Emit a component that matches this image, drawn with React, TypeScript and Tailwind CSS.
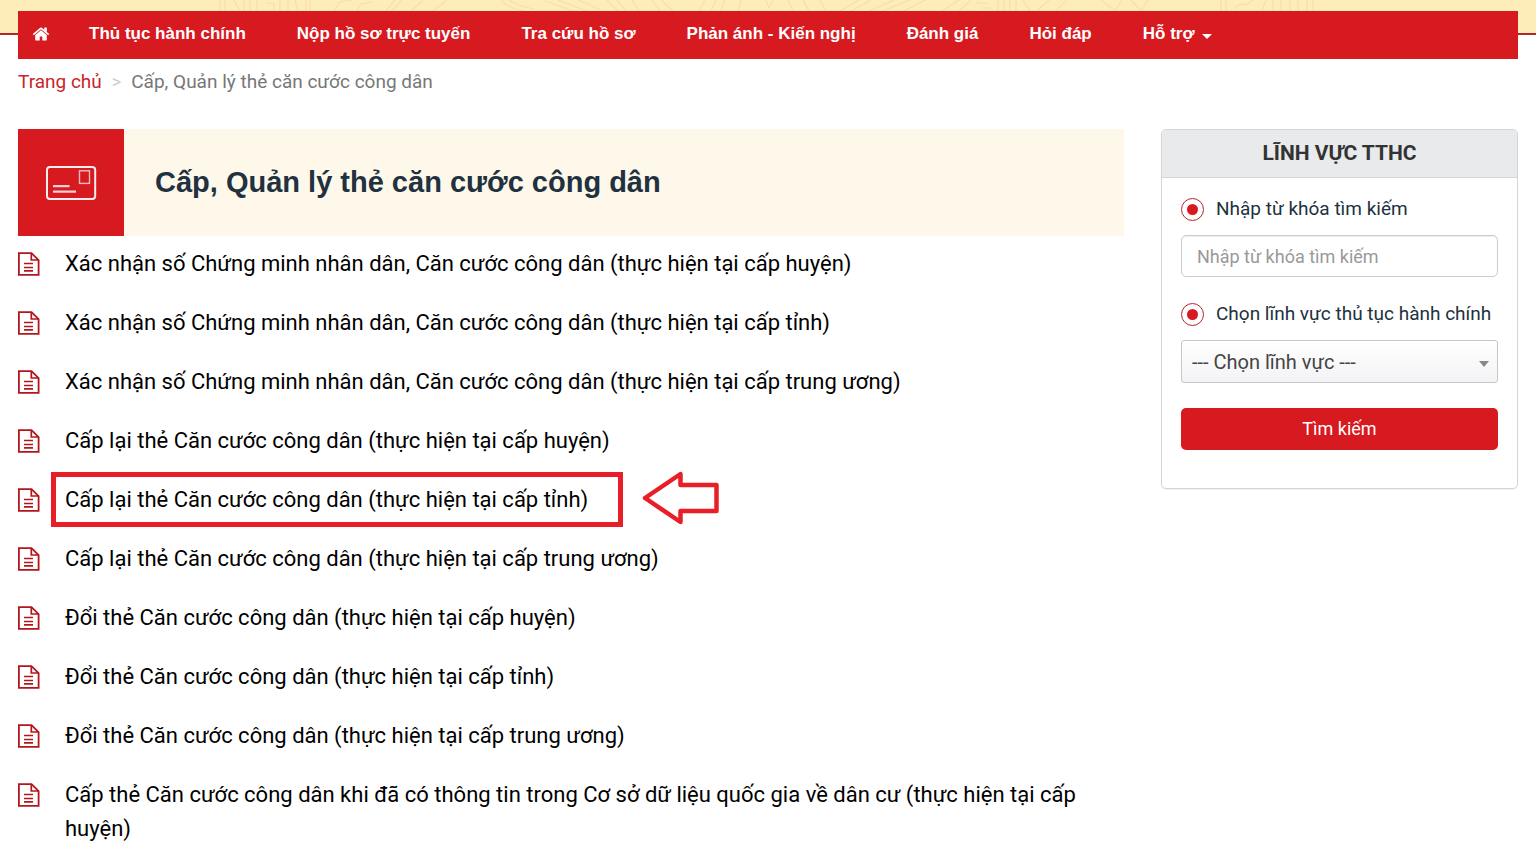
import React from "react";

const navItems = [
  "Thủ tục hành chính",
  "Nộp hồ sơ trực tuyến",
  "Tra cứu hồ sơ",
  "Phản ánh - Kiến nghị",
  "Đánh giá",
  "Hỏi đáp",
];

const procedures = [
  { text: "Xác nhận số Chứng minh nhân dân, Căn cước công dân (thực hiện tại cấp huyện)" },
  { text: "Xác nhận số Chứng minh nhân dân, Căn cước công dân (thực hiện tại cấp tỉnh)" },
  { text: "Xác nhận số Chứng minh nhân dân, Căn cước công dân (thực hiện tại cấp trung ương)" },
  { text: "Cấp lại thẻ Căn cước công dân (thực hiện tại cấp huyện)" },
  { text: "Cấp lại thẻ Căn cước công dân (thực hiện tại cấp tỉnh)", highlighted: true },
  { text: "Cấp lại thẻ Căn cước công dân (thực hiện tại cấp trung ương)" },
  { text: "Đổi thẻ Căn cước công dân (thực hiện tại cấp huyện)" },
  { text: "Đổi thẻ Căn cước công dân (thực hiện tại cấp tỉnh)" },
  { text: "Đổi thẻ Căn cước công dân (thực hiện tại cấp trung ương)" },
  { text: "Cấp thẻ Căn cước công dân khi đã có thông tin trong Cơ sở dữ liệu quốc gia về dân cư (thực hiện tại cấp huyện)" },
];

function HomeIcon() {
  return (
    <svg viewBox="0 0 1792 1792" className="size-[18px] fill-white" aria-hidden="true">
      <path d="M1472 992v480q0 26-19 45t-45 19h-384v-384h-256v384h-384q-26 0-45-19t-19-45v-480q0-1 .5-3t.5-3l575-474 575 474q1 2 1 6zm223-69l-62 74q-8 9-21 11h-3q-13 0-21-7l-692-577-692 577q-12 8-24 7-13-2-21-11l-62-74q-8-10-7-23.5t11-21.5l719-599q32-26 76-26t76 26l244 204v-195q0-14 9-23t23-9h192q14 0 23 9t9 23v408l219 182q10 8 11 21.5t-7 23.5z" />
    </svg>
  );
}

function DocumentIcon() {
  return (
    <svg viewBox="0 0 22 24" className="mt-[5px] h-6 w-[22px] shrink-0" fill="none" stroke="#b3161c" aria-hidden="true">
      <path d="M13.5 1.2H0.9V22.9H20.6V8.2Z" strokeWidth="1.8" />
      <path d="M13.3 1.2V8H20.4" strokeWidth="1.7" />
      <path d="M6 11.5H15M6 15.5H15M6 18.9H15" strokeWidth="1.6" />
    </svg>
  );
}

function CardIcon() {
  return (
    <svg viewBox="0 0 52 36" className="h-9 w-[52px]" fill="none" stroke="#fff" aria-hidden="true">
      <rect x="2" y="1.9" width="48.2" height="32.2" rx="3" strokeWidth="2" opacity=".92" />
      <rect x="34.5" y="5.8" width="10" height="12.6" strokeWidth="1.4" opacity=".7" />
      <path d="M8 21.2H24.5M8 26.6H31" strokeWidth="2.2" opacity=".8" />
    </svg>
  );
}

function HeaderPattern() {
  return (
    <svg viewBox="0 0 1100 11" className="mx-auto h-[11px] w-[1100px] max-w-full" fill="none" stroke="#fbd3a0" strokeWidth="1.2" opacity=".6" aria-hidden="true">
      <path d="M2 0V11M7 0V11M16 0L22 11M26 0V11M32 0V11M39 0V11M48 3H56V11M62 0V11M70 0V11M77 0L80 11M88 0V11M92 0V11M116 11L122 2L134 0M139 11L143 4L154 2M168 11L177 0M174 11L184 0M193 11L205 0M215 11L229 0" />
      <path d="M283 0Q290 8 306 11M291 0Q300 6 316 9M327 1L355 11M340 0L369 11M360 0L383 10M389 0L400 11M399 0L408 11M414 0L421 11M434 0L442 11M443 0L455 11" />
      <path d="M481 11L487 0M493 11L498 0M503 11L507 0M520 11L523 0M548 0L551 8L555 0M570 0L575 11M585 0L591 11M602 0L608 11M622 11L641 0M633 11L653 0M651 11L676 0M665 11L691 0M686 11L707 0" />
      <path d="M724 11L741 0M741 11L753 0M758 3H770M763 8H774M780 0V11M786 0V11M792 0V11M798 0V11M805 0L812 11M831 0L819 11M849 0L838 11M883 0L897 11L904 0M913 0L923 11L930 0" />
      <path d="M1003 0V11M1008 0V11M1017 9Q1021 2 1028 5L1035 0M1048 0L1044 11M1055 0V11M1063 0V11M1072 0V11M1080 0V11M1089 0V11M1095 0V11" />
    </svg>
  );
}

function Radio({ id, name }: { id: string; name: string }) {
  return (
    <input
      id={id}
      name={name}
      type="radio"
      defaultChecked
      className="mt-[2px] grid size-[23px] shrink-0 cursor-pointer appearance-none place-items-center rounded-full border border-[#b3262b] bg-white before:size-[11px] before:rounded-full checked:before:bg-[#d71920]"
    />
  );
}

export default function App() {
  return (
    <div className="min-h-screen bg-white font-['Roboto','Noto_Sans',sans-serif]">
      <div className="h-[35px] border-b-2 border-[#b3262b] bg-[#fdedb9]">
        <HeaderPattern />
      </div>

      <div className="px-[18px]">
        <nav className="relative -mt-6 flex h-12 items-center bg-[#d71920] pb-[2px] pl-[14px] font-['Liberation_Sans',Arial,sans-serif] text-[17px] font-bold text-white">
          <a href="#home" aria-label="Trang chủ" className="mr-[39px]">
            <HomeIcon />
          </a>
          <div className="flex items-center gap-[51px]">
            {navItems.map((item) => (
              <a key={item} href="#menu" className="whitespace-nowrap">
                {item}
              </a>
            ))}
            <button type="button" className="flex items-center gap-[7px] whitespace-nowrap">
              Hỗ trợ
              <svg viewBox="0 0 10 5" className="mt-1 h-[5px] w-[10px] fill-white" aria-hidden="true">
                <path d="M0 0H10L5 5Z" />
              </svg>
            </button>
          </div>
        </nav>

        <div className="flex h-[46px] items-center text-[19px] text-[#777]">
          <a href="#home" className="text-[#c9252b]">Trang chủ</a>
          <span className="mx-[10px] text-lg text-[#ccc]">&gt;</span>
          <span>Cấp, Quản lý thẻ căn cước công dân</span>
        </div>

        <div className="mt-6 grid grid-cols-[minmax(0,1fr)_357px] items-start gap-[37px]">
          <main>
            <div className="flex h-[107px] items-stretch bg-[#fdf8e9]">
              <div className="flex w-[106px] shrink-0 items-center justify-center bg-[#d71920]">
                <CardIcon />
              </div>
              <h1 className="flex items-center pl-[31px] font-['Liberation_Sans',Arial,sans-serif] text-[29px] font-bold text-[#213140]">
                Cấp, Quản lý thẻ căn cước công dân
              </h1>
            </div>

            <ul className="mt-[11px] flex flex-col gap-[25px]">
              {procedures.map((item) => (
                <li key={item.text} className="flex items-start gap-[25px]">
                  <DocumentIcon />
                  <a href="#procedure" className="relative text-[22px] leading-[34px] text-black">
                    {item.text}
                    {item.highlighted && (
                      <>
                        <span className="absolute -top-[11px] -right-[35px] -bottom-[10px] -left-[14px] border-[5px] border-[#e81f27]" />
                        <svg
                          viewBox="0 0 78 56"
                          className="absolute -top-[13px] left-full ml-[54px] h-14 w-[78px]"
                          fill="none"
                          stroke="#e81f27"
                          strokeWidth="4.5"
                          strokeLinejoin="round"
                          aria-hidden="true"
                        >
                          <path d="M3 28L38.5 4V15H74.5V41H38.5V52Z" />
                        </svg>
                      </>
                    )}
                  </a>
                </li>
              ))}
            </ul>
          </main>

          <aside className="rounded-[5px] border border-[#d3d5d7] bg-white shadow-[0_1px_1px_rgba(0,0,0,0.05)]">
            <h2 className="flex h-12 items-center justify-center rounded-t-[4px] border-b border-[#d3d5d7] bg-[#e8eaec] text-[21px] font-bold text-[#333]">
              LĨNH VỰC TTHC
            </h2>
            <form className="px-[19px] pt-[18px] pb-[38px]" onSubmit={(e) => e.preventDefault()}>
              <div className="flex h-[39px] items-start gap-3">
                <Radio id="by-keyword" name="keyword-mode" />
                <label htmlFor="by-keyword" className="text-[19px] leading-[26px] text-[#213140]">
                  Nhập từ khóa tìm kiếm
                </label>
              </div>
              <input
                type="text"
                aria-label="Nhập từ khóa tìm kiếm"
                placeholder="Nhập từ khóa tìm kiếm"
                className="block h-[42px] w-full rounded-[5px] border border-[#ccc] bg-white px-[15px] text-lg text-[#444] shadow-[inset_0_1px_1px_rgba(0,0,0,0.075)] placeholder:text-[#999]"
              />
              <div className="mt-6 flex h-[39px] items-start gap-3">
                <Radio id="by-field" name="field-mode" />
                <label htmlFor="by-field" className="text-[19px] leading-[26px] whitespace-nowrap text-[#213140]">
                  Chọn lĩnh vực thủ tục hành chính
                </label>
              </div>
              <div className="relative">
                <select
                  aria-label="Chọn lĩnh vực thủ tục hành chính"
                  className="block h-[43px] w-full appearance-none rounded-[3px] border border-[#c4c6c8] bg-linear-to-b from-white to-[#f3f3f5] px-[10px] text-xl text-[#444]"
                >
                  <option>--- Chọn lĩnh vực ---</option>
                </select>
                <svg viewBox="0 0 10 6" className="pointer-events-none absolute top-[21px] right-[9px] h-[6px] w-[10px] fill-[#888]" aria-hidden="true">
                  <path d="M0 0H10L5 6Z" />
                </svg>
              </div>
              <button type="submit" className="mt-[25px] block h-[42px] w-full rounded-[5px] bg-[#d71920] text-lg text-white">
                Tìm kiếm
              </button>
            </form>
          </aside>
        </div>
      </div>
    </div>
  );
}
